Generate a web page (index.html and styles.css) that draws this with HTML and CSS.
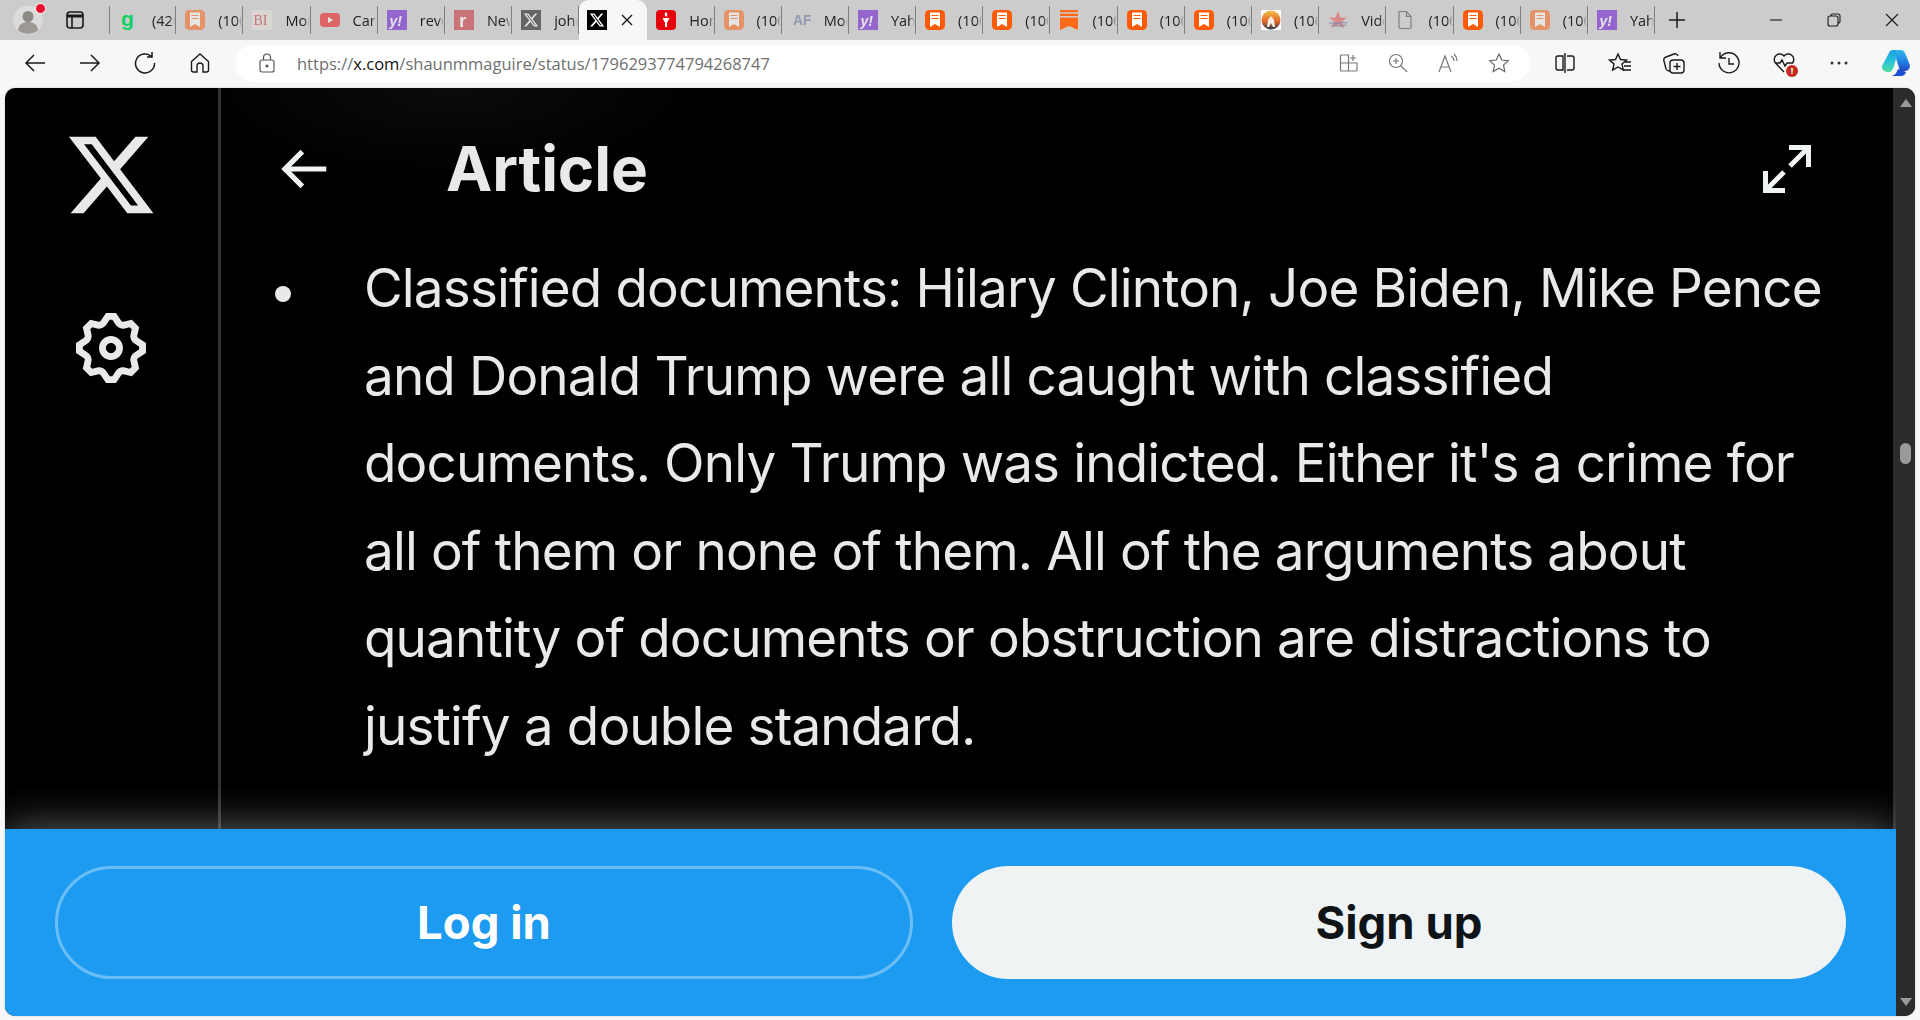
FILE: index.html
```html
<!DOCTYPE html>
<html lang="en">
<head>
    <meta charset="UTF-8">
    <title>Article / X</title>
    <link rel="stylesheet" href="styles.css">
</head>
<body>
    <svg class="defs" width="0" height="0">
        <symbol id="fav-bookmark" viewBox="0 0 20 20"><rect width="20" height="20" rx="4.500" fill="#ff5a05"/><path d="M5 2.500h10v14.500l-5-3-5 3z" fill="#fff"/><path d="M6.500 5.500h7M6.500 8.500h7" stroke="#ff5a05" stroke-width="1.200"/></symbol>
        <symbol id="fav-flat" viewBox="0 0 20 20"><path d="M1 0h18v2.300H1zM1 3.800h18v2.300H1z" fill="#ff6a1a"/><path d="M1 7.500h18V20l-9-4-9 4z" fill="#ff6a1a"/></symbol>
        <symbol id="fav-yahoo" viewBox="0 0 20 20"><rect width="20" height="20" fill="#5f01d1"/><text x="2.500" y="15.500" class="fav-text" font-size="14" font-style="italic" fill="#fff">y!</text></symbol>
        <symbol id="fav-x" viewBox="0 0 20 20"><rect width="20" height="20" fill="#000"/><path transform="translate(2 2) scale(.667)" d="M18.244 2.250h3.308l-7.227 8.260 8.502 11.240H16.170l-5.214-6.817L4.990 21.750H1.680l7.730-8.835L1.254 2.250H8.080l4.713 6.231zm-1.161 17.520h1.833L7.084 4.126H5.117z" fill="#fff"/></symbol>
    </svg>

    <div class="tabbar">
        <div class="profile">
            <svg width="30" height="30" viewBox="0 0 30 30"><circle cx="15" cy="15" r="14.500" fill="#dcdcdc"/><circle cx="15" cy="11.500" r="5.500" fill="#8d8a86"/><path d="M5 25c1-6 5-8 10-8s9 2 10 8c-5 5-15 5-20 0z" fill="#9c9994"/></svg>
            <span class="profile-dot"></span>
        </div>
        <div class="tab-actions">
            <svg width="20" height="20" viewBox="0 0 20 20" fill="none" stroke="#1a1a1a" stroke-width="1.600"><rect x="2" y="2" width="16" height="16" rx="3"/><path d="M2 6h16" stroke-width="3"/><path d="M7 6v12"/></svg>
        </div>
        <div class="tabs">
            <div class="tab first"><svg class="fav" viewBox="0 0 20 20"><text x="2" y="16" class="fav-text" font-size="21" fill="#0ed264">g</text></svg><span class="tab-title">(420)</span></div>
            <div class="tab dim"><svg class="fav"><use href="#fav-bookmark"/></svg><span class="tab-title">(100)</span></div>
            <div class="tab dim"><svg class="fav" viewBox="0 0 20 20"><rect width="20" height="20" fill="#e8e0dc"/><text x="1.500" y="15" class="fav-serif" font-size="14" fill="#b3261e">BI</text></svg><span class="tab-title">More</span></div>
            <div class="tab dim"><svg class="fav" viewBox="0 0 20 20"><rect y="3" width="20" height="14" rx="4" fill="#e00"/><path d="M8 7l5 3-5 3z" fill="#fff"/></svg><span class="tab-title">Carl</span></div>
            <div class="tab dim"><svg class="fav"><use href="#fav-yahoo"/></svg><span class="tab-title">revolt</span></div>
            <div class="tab dim"><svg class="fav" viewBox="0 0 20 20"><rect width="20" height="20" fill="#c91c25"/><text x="5" y="17" class="fav-text" font-size="19" fill="#fff">r</text></svg><span class="tab-title">News</span></div>
            <div class="tab dim"><svg class="fav"><use href="#fav-x"/></svg><span class="tab-title">john</span></div>
            <div class="tab active"><svg class="fav"><use href="#fav-x"/></svg><svg class="tab-close" width="12" height="12" viewBox="0 0 12 12" stroke="#1a1a1a" stroke-width="1.400"><path d="M1 1l10 10M11 1L1 11"/></svg></div>
            <div class="tab"><svg class="fav" viewBox="0 0 20 20"><rect width="20" height="20" rx="4" fill="#e8000d"/><path d="M6.500 8h7l-2 4h-3zM9 12h2v5H9zM10 2c2 1.500 1.500 3.500 0 5-1.500-1.500-2-3.500 0-5z" fill="#fff"/></svg><span class="tab-title">Home</span></div>
            <div class="tab dim"><svg class="fav"><use href="#fav-bookmark"/></svg><span class="tab-title">(100)</span></div>
            <div class="tab dim"><svg class="fav" viewBox="0 0 20 20"><text x="2" y="15" class="fav-text" font-size="14" fill="#5a6a9a">AF</text></svg><span class="tab-title">Mode</span></div>
            <div class="tab dim"><svg class="fav"><use href="#fav-yahoo"/></svg><span class="tab-title">Yahoo</span></div>
            <div class="tab"><svg class="fav"><use href="#fav-bookmark"/></svg><span class="tab-title">(100)</span></div>
            <div class="tab"><svg class="fav"><use href="#fav-bookmark"/></svg><span class="tab-title">(100)</span></div>
            <div class="tab"><svg class="fav"><use href="#fav-flat"/></svg><span class="tab-title">(100)</span></div>
            <div class="tab"><svg class="fav"><use href="#fav-bookmark"/></svg><span class="tab-title">(100)</span></div>
            <div class="tab"><svg class="fav"><use href="#fav-bookmark"/></svg><span class="tab-title">(100)</span></div>
            <div class="tab"><svg class="fav" viewBox="0 0 20 20"><defs><linearGradient id="fox-sky" x1="0" y1="0" x2="0" y2="1"><stop offset="0" stop-color="#f5c04a"/><stop offset=".6" stop-color="#e2622a"/><stop offset="1" stop-color="#1d3a55"/></linearGradient></defs><rect width="20" height="20" fill="#fff"/><circle cx="10" cy="10" r="9.500" fill="url(#fox-sky)"/><path d="M6 17l1-7 3-4 3 4 1 7h-2l-2-4-2 4z" fill="#f4efe6"/></svg><span class="tab-title">(100)</span></div>
            <div class="tab"><svg class="fav" viewBox="0 0 20 20"><path d="M10 1l2.500 6.500H19l-5 4 2 7-6-4-6 4 2-7-5-4h6.500z" fill="#d98a8c"/><path d="M1 13.500c4-2 6 1 9 0s5-1.500 9-.5M3 16c4-2 6 1 9 0s4-1 6-.5" stroke="#7a86b4" fill="none"/></svg><span class="tab-title">Video</span></div>
            <div class="tab"><svg class="fav" viewBox="0 0 20 20" fill="none" stroke="#7f7f7f" stroke-width="1.200"><path d="M4 1.500h7.500l4.500 5v10.500a1.500 1.500 0 0 1-1.500 1.500h-9A1.500 1.500 0 0 1 4 17zM11.500 1.500v5H16"/></svg><span class="tab-title">(100)</span></div>
            <div class="tab"><svg class="fav"><use href="#fav-bookmark"/></svg><span class="tab-title">(100)</span></div>
            <div class="tab dim"><svg class="fav"><use href="#fav-bookmark"/></svg><span class="tab-title">(100)</span></div>
            <div class="tab dim"><svg class="fav"><use href="#fav-yahoo"/></svg><span class="tab-title">Yahoo</span></div>
            <svg class="new-tab" width="20" height="20" viewBox="0 0 20 20" stroke="#1a1a1a" stroke-width="1.500"><path d="M10 2v16M2 10h16"/></svg>
        </div>
        <div class="window-btns">
            <svg width="16" height="16" viewBox="0 0 16 16" stroke="#1a1a1a" stroke-width="1.100" fill="none"><path d="M2 8h12"/></svg>
            <svg width="16" height="16" viewBox="0 0 16 16" stroke="#1a1a1a" stroke-width="1.100" fill="none"><rect x="2" y="4" width="10" height="10" rx="2"/><path d="M5 4V3.500A1.500 1.500 0 0 1 6.500 2H12a2 2 0 0 1 2 2v5.500a1.500 1.500 0 0 1-2 1.500"/></svg>
            <svg width="16" height="16" viewBox="0 0 16 16" stroke="#1a1a1a" stroke-width="1.100" fill="none"><path d="M2 2l12 12M14 2L2 14"/></svg>
        </div>
    </div>

    <div class="toolbar">
        <div class="nav-btns">
            <svg width="22" height="22" viewBox="0 0 22 22" fill="none" stroke="#1a1a1a" stroke-width="1.500"><path d="M21 11H2M10 3l-8 8 8 8"/></svg>
            <svg width="22" height="22" viewBox="0 0 22 22" fill="none" stroke="#1a1a1a" stroke-width="1.500"><path d="M1 11h19M12 3l8 8-8 8"/></svg>
            <svg width="22" height="22" viewBox="0 0 22 22" fill="none" stroke="#1a1a1a" stroke-width="1.500"><path d="M17.500 4.500A9.500 9.500 0 1 0 20.500 11M18 0v5h-5"/></svg>
            <svg width="22" height="22" viewBox="0 0 22 22" fill="none" stroke="#1a1a1a" stroke-width="1.400"><path d="M2.500 9.500L11 2l8.500 7.500V18a2 2 0 0 1-2 2H14v-6a3 3 0 0 0-6 0v6H4.500a2 2 0 0 1-2-2z"/></svg>
        </div>
        <div class="address">
            <svg class="lock" width="16" height="20" viewBox="0 0 16 20" fill="none" stroke="#555" stroke-width="1.200"><rect x="1" y="7" width="14" height="12" rx="2"/><path d="M4.500 7V4.500a3.500 3.500 0 0 1 7 0V7"/><circle cx="8" cy="13" r="1" fill="#555"/></svg>
            <span class="url">https://<b>x.com</b>/shaunmmaguire/status/1796293774794268747</span>
            <div class="addr-icons">
                <svg width="20" height="20" viewBox="0 0 20 20" fill="none" stroke="#777" stroke-width="1.200"><path d="M1.500 17V3a1 1 0 0 1 1-1h7v16M1.500 10H18v7a1 1 0 0 1-1 1H2.500a1 1 0 0 1-1-1M14 2v6M11 5h6"/></svg>
                <svg width="20" height="20" viewBox="0 0 20 20" fill="none" stroke="#777" stroke-width="1.200"><circle cx="8" cy="8" r="6.500"/><path d="M12.500 12.500L19 19M5 8h6M8 5v6"/></svg>
                <svg width="22" height="22" viewBox="0 0 22 22" fill="none" stroke="#777" stroke-width="1.200"><path d="M2 20L8 4l6 16M4 15h8M14 4c2 1 3 3 3 5M17 2c2 2 3 4 3 7"/></svg>
                <svg width="22" height="22" viewBox="0 0 22 22" fill="none" stroke="#666" stroke-width="1.200"><path d="M11 2l2.800 6 6.500.7-4.800 4.400 1.300 6.400L11 16.300 5.200 19.500l1.300-6.400L1.700 8.700 8.200 8z"/></svg>
            </div>
        </div>
        <div class="tool-icons">
            <svg width="22" height="22" viewBox="0 0 22 22" fill="none" stroke="#1a1a1a" stroke-width="1.400"><path d="M9 4H4a2 2 0 0 0-2 2v10a2 2 0 0 0 2 2h5zM13 4h5a2 2 0 0 1 2 2v10a2 2 0 0 1-2 2h-5M11 1v20"/></svg>
            <svg width="24" height="22" viewBox="0 0 24 22" fill="none" stroke="#1a1a1a" stroke-width="1.400"><path d="M10 2l2.500 5.500 6 .6-4.500 4 1.300 6L10 15l-5.300 3.100 1.300-6-4.500-4 6-.6zM16 10h7M16 14h7M15 18h8"/></svg>
            <svg width="22" height="24" viewBox="0 0 22 24" fill="none" stroke="#1a1a1a" stroke-width="1.400"><path d="M7 20a4 4 0 0 1-4-2L1 10a3 3 0 0 1 2-4l8-3a3 3 0 0 1 4 2"/><rect x="7" y="9" width="14" height="13" rx="3"/><path d="M14 12v7M10.500 15.500h7"/></svg>
            <svg width="24" height="24" viewBox="0 0 24 24" fill="none" stroke="#1a1a1a" stroke-width="1.400"><path d="M3.500 6.500A10 10 0 1 1 2 12M3 1v6h6M12 7v6h5"/></svg>
            <div class="health">
                <svg width="24" height="22" viewBox="0 0 24 22" fill="none" stroke="#1a1a1a" stroke-width="1.400"><path d="M12 20L3.500 11A5.500 5.500 0 0 1 12 4a5.500 5.500 0 0 1 8.500 7M3 11h5l2-3 3 6 2-3h6"/></svg>
                <span class="health-badge">!</span>
            </div>
            <svg width="22" height="22" viewBox="0 0 22 22" fill="#333"><circle cx="4" cy="11" r="1.500"/><circle cx="11" cy="11" r="1.500"/><circle cx="18" cy="11" r="1.500"/></svg>
            <svg width="30" height="28" viewBox="0 0 30 28">
                <defs>
                    <linearGradient id="cp-a" x1="0" y1="0" x2="0" y2="1"><stop offset="0" stop-color="#1a9ee0"/><stop offset=".55" stop-color="#2bc4d8"/><stop offset="1" stop-color="#4fdc9a"/></linearGradient>
                    <linearGradient id="cp-b" x1="0" y1="0" x2="0" y2="1"><stop offset="0" stop-color="#35b8f0"/><stop offset=".6" stop-color="#1c7be0"/><stop offset="1" stop-color="#2a46c8"/></linearGradient>
                </defs>
                <path d="M11 1h9c2 0 3.500 1.500 4 3l4.500 11c1.500 3.500-1 7-4.500 7h-5L14 6c-.6-2.500-1.500-5-3-5z" fill="url(#cp-b)"/>
                <path d="M9 2C11 .5 14 .5 15 3c.6 1.500 1 3 .5 5L13 17c-1.500 5-3 6-6 6C3 23 .5 20 1 17z" fill="url(#cp-a)"/>
                <path d="M10 27h10c3 0 4.500-2 5-4l-8-3c-1 3-3 7-7 7z" fill="#1a4fd0"/>
            </svg>
        </div>
    </div>

    <div class="viewport">
        <div class="page">
            <div class="article-wrap">
                <nav class="sidebar">
                    <svg class="x-logo" viewBox="0 0 24 24"><path d="M18.244 2.250h3.308l-7.227 8.260 8.502 11.240H16.170l-5.214-6.817L4.990 21.750H1.680l7.730-8.835L1.254 2.250H8.080l4.713 6.231zm-1.161 17.520h1.833L7.084 4.126H5.117z"/></svg>
                    <svg class="gear" viewBox="0 0 24 24"><path d="M10.540 1.750h2.920l1.570 2.360c.11.17.32.25.53.21l2.530-.59 2.170 2.170-.58 2.540c-.05.2.04.41.21.53l2.360 1.570v2.920l-2.360 1.570c-.17.12-.26.33-.21.53l.58 2.540-2.170 2.170-2.530-.59c-.21-.04-.42.04-.53.21l-1.570 2.360h-2.920l-1.580-2.360c-.11-.17-.32-.25-.52-.21l-2.540.59-2.170-2.170.58-2.540c.05-.2-.03-.41-.21-.53l-2.350-1.570v-2.920L4.100 8.970c.18-.12.26-.33.21-.53L3.730 5.900 5.900 3.730l2.540.59c.2.04.41-.04.52-.21l1.580-2.360zm1.070 2l-.98 1.470C10.050 6.080 9 6.500 7.990 6.270l-1.460-.34-.6.6.33 1.460c.24 1.010-.18 2.070-1.050 2.640l-1.460.98v.78l1.460.98c.87.57 1.290 1.630 1.050 2.640l-.33 1.460.6.6 1.460-.34c1.010-.23 2.060.19 2.640 1.050l.98 1.470h.78l.97-1.470c.58-.86 1.630-1.280 2.650-1.050l1.450.34.61-.6-.34-1.460c-.23-1.010.18-2.070 1.050-2.640l1.470-.98v-.78l-1.470-.98c-.87-.57-1.280-1.630-1.050-2.640l.34-1.460-.61-.6-1.450.34c-1.020.23-2.070-.19-2.650-1.050l-.97-1.470h-.78zM12 10.500c-.83 0-1.500.67-1.500 1.500s.67 1.500 1.500 1.500c.82 0 1.500-.67 1.500-1.500s-.68-1.500-1.500-1.500zM8.500 12c0-1.930 1.560-3.500 3.500-3.500 1.930 0 3.500 1.570 3.500 3.500s-1.570 3.500-3.500 3.500c-1.940 0-3.500-1.570-3.500-3.500z"/></svg>
                </nav>
                <main class="article">
                    <header class="article-head">
                        <svg class="back-arrow" viewBox="0 0 24 24"><path d="M7.414 13l5.043 5.040-1.414 1.420L3.586 12l7.457-7.460 1.414 1.420L7.414 11H21v2H7.414z"/></svg>
                        <h1>Article</h1>
                        <svg class="expand" viewBox="0 0 48 48" fill="none" stroke="#eff3f4" stroke-width="5"><path d="M26 2.500h19.500V22M45 3L27 21M2.500 26v19.500H22M3 45l18-18"/></svg>
                    </header>
                    <ul class="points">
                        <li>Classified documents: Hilary Clinton, Joe Biden, Mike Pence and Donald Trump were all caught with classified documents. Only Trump was indicted. Either it's a crime for all of them or none of them. All of the arguments about quantity of documents or obstruction are distractions to justify a double standard.</li>
                    </ul>
                </main>
            </div>
            <div class="login-bar">
                <button class="btn btn-login">Log in</button>
                <button class="btn btn-signup">Sign up</button>
            </div>
        </div>
        <div class="scrollbar">
            <span class="arrow-up"></span>
            <span class="thumb"></span>
            <span class="arrow-down"></span>
        </div>
    </div>
</body>
</html>
```

FILE: styles.css
```css
* {
    box-sizing: border-box;
}
body {
    margin: 0;
    height: 1020px;
    overflow: hidden;
    display: flex;
    flex-direction: column;
    background-color: #f7f7f7;
    font-family: 'Open Sans', sans-serif;
}
.defs {
    position: absolute;
}
.fav-text {
    font-family: 'Liberation Sans', sans-serif;
    font-weight: bold;
}
.fav-serif {
    font-family: 'Liberation Serif', serif;
}

/* tab strip */
.tabbar {
    height: 40px;
    flex: none;
    display: flex;
    align-items: center;
    background-color: #cccccc;
}
.profile {
    position: relative;
    width: 30px;
    height: 30px;
    margin-left: 13px;
}
.profile-dot {
    position: absolute;
    top: -2px;
    right: -3px;
    width: 9px;
    height: 9px;
    border-radius: 50%;
    background-color: #e8112d;
    border: 1px solid #fff;
    box-sizing: content-box;
}
.tab-actions {
    display: flex;
    margin-left: 22px;
    width: 44px;
}
.tabs {
    display: flex;
    align-items: center;
    height: 40px;
    width: 1612px;
}
.tab {
    width: 67.2px;
    height: 28px;
    flex: none;
    display: flex;
    align-items: center;
    gap: 13px;
    padding-left: 9px;
    border-right: 1px solid #808080;
    overflow: hidden;
}
.tab.first {
    border-left: 1px solid #808080;
}
.fav {
    width: 20px;
    height: 20px;
    flex: none;
}
.tab.dim .fav {
    opacity: 0.5;
}
.tab-title {
    min-width: 0;
    flex: 1;
    overflow: hidden;
    font-size: 14.5px;
    color: #222;
    white-space: nowrap;
    -webkit-mask-image: linear-gradient(to right, #000 75%, transparent);
    mask-image: linear-gradient(to right, #000 75%, transparent);
}
.tab.active {
    width: 68px;
    height: 40px;
    justify-content: space-between;
    padding: 0 14px 0 8px;
    background-color: #f7f7f7;
    border-right: 0;
    border-radius: 10px 10px 0 0;
}
.new-tab {
    margin-left: 12px;
    flex: none;
}
.window-btns {
    display: flex;
    gap: 42px;
    margin-left: 47px;
}

/* address bar row */
.toolbar {
    height: 48px;
    flex: none;
    display: flex;
    align-items: center;
    padding-bottom: 2px;
}
.nav-btns {
    display: flex;
    gap: 33px;
    padding-left: 24px;
    width: 235px;
}
.address {
    width: 1295px;
    height: 37px;
    display: flex;
    align-items: center;
    background-color: #fff;
    border-radius: 19px;
    padding-left: 24px;
}
.url {
    margin-left: 22px;
    font-size: 16.5px;
    color: #6f6f6f;
    white-space: nowrap;
}
.url b {
    font-weight: normal;
    color: #111;
}
.addr-icons {
    display: flex;
    align-items: center;
    gap: 29px;
    margin-left: auto;
    padding-right: 20px;
}
.tool-icons {
    display: flex;
    align-items: center;
    gap: 31.500px;
    padding-left: 24px;
}
.health {
    position: relative;
    display: flex;
}
.health-badge {
    position: absolute;
    right: -2px;
    bottom: -3px;
    width: 12px;
    height: 12px;
    border-radius: 50%;
    background-color: #c42b1c;
    color: #fff;
    font-size: 9px;
    font-weight: bold;
    line-height: 12px;
    text-align: center;
}

/* page in the browser */
.viewport {
    flex: 1;
    display: flex;
    margin: 0 5px 4px;
    border-radius: 10px;
    overflow: hidden;
    background-color: #000;
    box-shadow: 0 0 2px rgba(0, 0, 0, 0.2);
}
.page {
    flex: 1;
    min-width: 0;
    display: flex;
    flex-direction: column;
}
.article-wrap {
    flex: 1;
    min-height: 0;
    display: flex;
}
.sidebar {
    width: 216px;
    flex: none;
    display: flex;
    flex-direction: column;
    align-items: center;
    padding: 40px 2px 0 0;
    border-right: 3px solid #2f3336;
}
.x-logo {
    width: 94px;
    height: 94px;
    fill: #e7e9ea;
}
.gear {
    width: 82px;
    height: 82px;
    margin-top: 85px;
    fill: #e7e9ea;
}
.article {
    flex: 1;
    min-width: 0;
    color: #e7e9ea;
    background: radial-gradient(ellipse 260px 90px at 230px 0, #0b0b0b, #000);
}
.article-head {
    height: 156px;
    display: flex;
    align-items: center;
    padding: 6px 82px 0 51px;
}
.back-arrow {
    width: 62px;
    height: 62px;
    fill: #eff3f4;
}
.article-head h1 {
    margin: 0 0 2px 112px;
    font-family: 'Inter', sans-serif;
    font-size: 62px;
    font-weight: 700;
    letter-spacing: -0.1px;
    color: #e7e9ea;
}
.expand {
    width: 48px;
    height: 48px;
    margin-left: auto;
}
.points {
    list-style: none;
    margin: 0;
    padding: 1px 60px 0 0;
}
.points li {
    display: flex;
    font-family: 'Inter', sans-serif;
    font-size: 53px;
    letter-spacing: -0.85px;
    line-height: 87.600px;
}
.points li::before {
    content: "";
    flex: none;
    width: 16px;
    height: 16px;
    margin: 41px 73px 0 54px;
    border-radius: 50%;
    background-color: #e7e9ea;
}
.login-bar {
    height: 187px;
    flex: none;
    position: relative;
    margin-right: -3px;
    display: grid;
    grid-template-columns: 858fr 894fr;
    gap: 39px;
    padding: 37px 50px;
    background-color: #1d9bf0;
    box-shadow: 0 0 40px rgba(255, 255, 255, 0.4);
    clip-path: inset(-40px 0 0 0);
}
.btn {
    border-radius: 57px;
    font-family: 'Inter', sans-serif;
    font-size: 45.500px;
    font-weight: 700;
}
.btn-login {
    background-color: transparent;
    border: 3px solid rgba(255, 255, 255, 0.35);
    color: #fff;
}
.btn-signup {
    background-color: #eff3f4;
    border: 0;
    color: #0f1419;
}
.scrollbar {
    width: 22px;
    flex: none;
    display: flex;
    flex-direction: column;
    align-items: center;
    background-color: #2c2c2c;
    padding: 11px 0 10px 3px;
}
.arrow-up {
    border: 6px solid transparent;
    border-top: 0;
    border-bottom: 8px solid #9a9a9a;
}
.arrow-down {
    border: 6px solid transparent;
    border-bottom: 0;
    border-top: 8px solid #9a9a9a;
    margin-top: auto;
}
.thumb {
    width: 11px;
    height: 21px;
    margin-top: 336px;
    border-radius: 6px;
    background-color: #9a9a9a;
}
```
